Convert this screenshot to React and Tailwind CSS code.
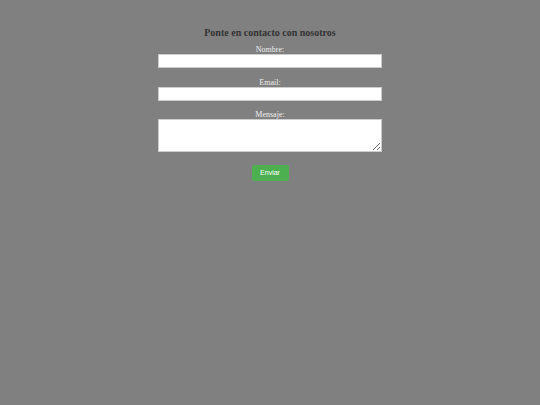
import React, { useState } from "react";

export default function App() {
  const [form, setForm] = useState({ nombre: "", email: "", mensaje: "" });
  const onChange = (k) => (e) => setForm((f) => ({ ...f, [k]: e.target.value }));

  return (
    <div className="min-h-[405px] w-full bg-[#808080] font-['Liberation_Serif',serif]">
      <div className="mx-auto flex w-[224px] flex-col items-center pt-[27px]">
        <h2 className="text-[10px] leading-[12px] font-bold text-[#333333]">
          Ponte en contacto con nosotros
        </h2>

        <form className="mt-[6px] flex w-full flex-col items-center" onSubmit={(e) => e.preventDefault()}>
          <label className="text-[8px] leading-[9px] text-[#eeeeee]">Nombre:</label>
          <input
            value={form.nombre}
            onChange={onChange("nombre")}
            className="h-[14px] w-full border border-[#cccccc] bg-white outline-none"
          />

          <label className="mt-[10px] text-[8px] leading-[9px] text-[#eeeeee]">Email:</label>
          <input
            type="email"
            value={form.email}
            onChange={onChange("email")}
            className="h-[14px] w-full border border-[#cccccc] bg-white outline-none"
          />

          <label className="mt-[9px] text-[8px] leading-[9px] text-[#eeeeee]">Mensaje:</label>
          <textarea
            value={form.mensaje}
            onChange={onChange("mensaje")}
            className="h-[33px] w-full border border-[#cccccc] bg-white outline-none"
          />

          <button
            type="submit"
            className="mt-[13px] h-[16px] w-[37px] rounded-[2px] bg-[#4caf50] font-['Liberation_Sans',sans-serif] text-[7px] text-white"
          >
            Enviar
          </button>
        </form>
      </div>
    </div>
  );
}
